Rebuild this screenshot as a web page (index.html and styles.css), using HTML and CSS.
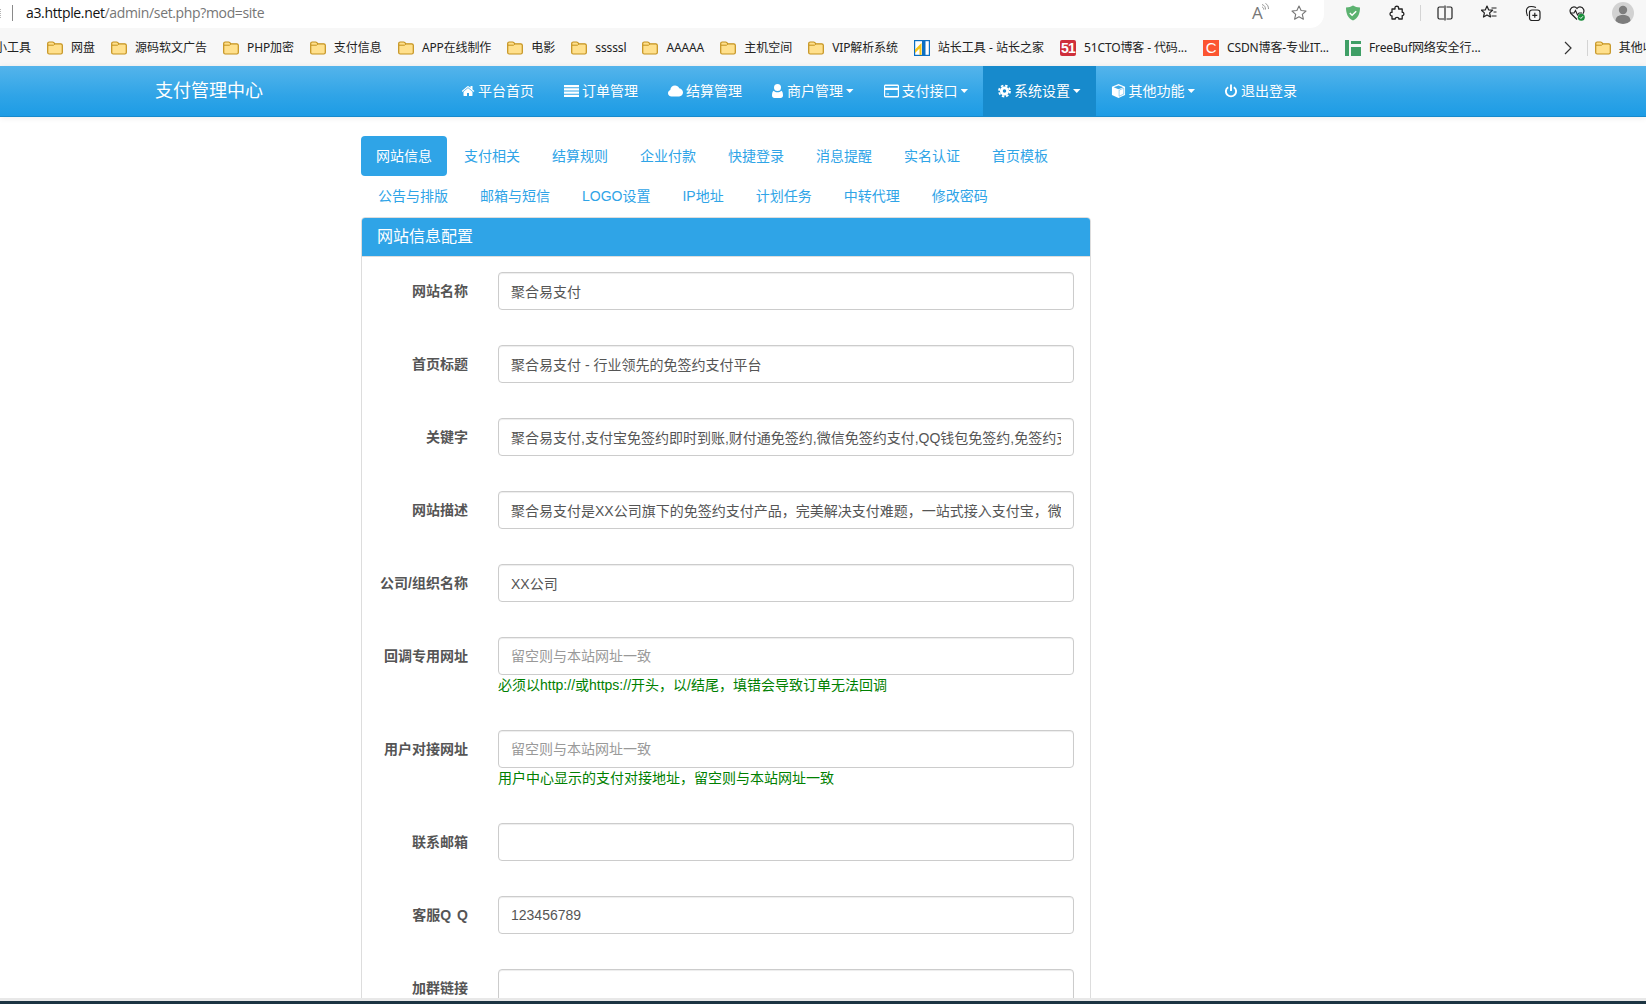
FILE: index.html
```html
<!DOCTYPE html>
<html lang="zh-CN">
<head>
    <meta charset="UTF-8">
    <meta name="viewport" content="width=device-width, initial-scale=1.0">
    <link rel="stylesheet" href="styles.css">
    <title>支付管理中心</title>
</head>
<body>

    <svg class="icon-defs" aria-hidden="true">
        <symbol id="folder" viewBox="0 0 16 16">
            <path d="M.7 3.5C.7 2.6 1.4 2 2.2 2h3.4c.4 0 .7.1 1 .4L8 3.8h5.8c.9 0 1.5.7 1.5 1.5v7.2c0 .9-.7 1.5-1.5 1.5H2.2c-.9 0-1.5-.7-1.5-1.5z" fill="#ffe08c" stroke="#c4911c" stroke-width="1.2"/>
            <path d="M1 5.2h5.5L8 3.8" fill="none" stroke="#c4911c" stroke-width="1"/>
        </symbol>
    </svg>

    <div class="page">

        <!-- browser chrome -->
        <div class="topbar">
            <div class="address">
                <span class="address-dots"></span>
                <span class="address-sep"></span>
                <span class="url"><b>a3.httple.net</b>/admin/set.php?mod=site</span>
                <span class="read-aloud">A<svg viewBox="0 0 8 10"><path d="M1 1.5c2.5.8 3.5 2.5 3.5 5M1 4c1.2.4 1.8 1.2 1.8 2.6M4.5 .5c2 1 3 3 3 5.500" fill="none" stroke="#8a8a8a" stroke-width=".9"/></svg></span>
                <svg class="tool" viewBox="0 0 16 16"><path d="M8 1l2.100 4.500 4.900.5-3.700 3.300 1.100 4.900L8 11.700l-4.400 2.500 1.100-4.900L1 6l4.900-.5z" fill="none" stroke="#777" stroke-width="1.100" stroke-linejoin="round"/></svg>
            </div>
            <div class="tools">
                <svg class="tool" viewBox="0 0 16 16"><path d="M8 .6c2 1.300 4 1.800 7 1.900 0 5.500-1.500 10.500-7 13-5.500-2.500-7-7.500-7-13 3-.1 5-.6 7-1.900z" fill="#5cb270"/><path d="M4.800 8l2.300 2.200 4.100-4" fill="none" stroke="#fff" stroke-width="1.500"/></svg>
                <svg class="tool" viewBox="0 0 16 16"><path d="M6 2.500C6 .8 9.600.8 9.600 2.500V4h3.600v3.300c2.200-.6 2.200 3.800 0 3.300V14H9.800c.5-2.200-4-2.200-3.500 0H3v-3.200C.4 11.400.4 6.700 3 7.300V4h3z" fill="none" stroke="#222" stroke-width="1.300" stroke-linejoin="round"/></svg>
                <span class="tool-sep"></span>
                <svg class="tool" viewBox="0 0 16 16"><path d="M7 2H2.500C1.700 2 1 2.700 1 3.500v9c0 .8.700 1.500 1.500 1.500H7M9.500 2h4c.8 0 1.500.7 1.500 1.500v9c0 .8-.7 1.500-1.500 1.500h-4M8 .5v15" fill="none" stroke="#222" stroke-width="1.200"/></svg>
                <svg class="tool" viewBox="0 0 16 16"><path d="M6 1l1.600 3.800 4 .4-3 2.700.9 4.100L6 9.900l-3.500 2.100.9-4.100-3-2.700 4-.4z" fill="none" stroke="#222" stroke-width="1.200" stroke-linejoin="round"/><path d="M10.500 3h5M12.500 7h3M10.500 11h5" stroke="#222" stroke-width="1.200"/></svg>
                <svg class="tool" viewBox="0 0 16 16"><path d="M2.500 11C1 7 1.300 4 2.500 2.800 4 1.300 8 1.300 11 2.500" fill="none" stroke="#222" stroke-width="1.100"/><path d="M4.500 7.500c0-1.500 1-2.500 2.500-2.500h5.500c1.400 0 2.500 1 2.500 2.500V13c0 1.400-1 2.500-2.500 2.500H7c-1.400 0-2.500-1-2.500-2.500z" fill="none" stroke="#222" stroke-width="1.200"/><path d="M9.800 7.800v5M7.300 10.300h5" stroke="#222" stroke-width="1.200"/></svg>
                <svg class="tool" viewBox="0 0 16 16"><path d="M8 14.500L2.200 8.800C-.3 6 1.800 1.800 5 1.800c1.300 0 2.300.7 3 1.700.7-1 1.700-1.700 3-1.700 3.200 0 5.300 4.200 2.800 7" fill="none" stroke="#222" stroke-width="1.200"/><path d="M1 8h4l1.500-2.500L8.500 10l1.500-2h3" fill="none" stroke="#222" stroke-width="1.100"/><circle cx="12.300" cy="12.300" r="3.500" fill="#1a8f3c"/><path d="M10.700 12.300l1.200 1.200 2-2.200" fill="none" stroke="#fff" stroke-width="1"/></svg>
                <span class="avatar"><svg viewBox="0 0 22 22"><circle cx="11" cy="8" r="4.200" fill="#7d7d7d"/><path d="M3.500 19c0-4.500 3.500-6 7.500-6s7.500 1.500 7.500 6c-2 2-5 3-7.500 3s-5.500-1-7.500-3z" fill="#7d7d7d"/></svg></span>
            </div>
        </div>

        <div class="bookmarks">
            <span class="mark mark-first">小工具</span>
            <span class="mark"><svg class="fav"><use href="#folder"/></svg>网盘</span>
            <span class="mark"><svg class="fav"><use href="#folder"/></svg>源码软文广告</span>
            <span class="mark latin"><svg class="fav"><use href="#folder"/></svg>PHP加密</span>
            <span class="mark"><svg class="fav"><use href="#folder"/></svg>支付信息</span>
            <span class="mark latin"><svg class="fav"><use href="#folder"/></svg>APP在线制作</span>
            <span class="mark"><svg class="fav"><use href="#folder"/></svg>电影</span>
            <span class="mark latin"><svg class="fav"><use href="#folder"/></svg>sssssl</span>
            <span class="mark latin"><svg class="fav"><use href="#folder"/></svg>AAAAA</span>
            <span class="mark"><svg class="fav"><use href="#folder"/></svg>主机空间</span>
            <span class="mark latin"><svg class="fav"><use href="#folder"/></svg>VIP解析系统</span>
            <span class="mark"><svg class="fav" viewBox="0 0 16 16"><rect x=".6" y=".6" width="14.800" height="14.800" fill="#fff" stroke="#0b6fc2" stroke-width="1.200"/><path d="M1 9.500L7.500 3v12h-2V8.500L1 13z" fill="#f5c518"/><rect x="8" y="1" width="3.500" height="14" fill="#0b6fc2"/></svg>站长工具 - 站长之家</span>
            <span class="mark latin"><span class="fav logo-51">51</span>51CTO博客 - 代码...</span>
            <span class="mark latin"><span class="fav logo-c">C</span>CSDN博客-专业IT...</span>
            <span class="mark latin"><svg class="fav" viewBox="0 0 16 16"><rect width="4" height="16" fill="#3f9f66"/><rect x="6" y="1" width="10" height="3" fill="#3f9f66"/><rect x="6" y="7" width="10" height="9" fill="#3f9f66"/></svg>FreeBuf网络安全行...</span>
            <svg class="more" viewBox="0 0 8 14"><path d="M1 1l6 6-6 6" fill="none" stroke="#333" stroke-width="1.200"/></svg>
            <span class="mark-sep"></span>
            <span class="mark mark-last"><svg class="fav"><use href="#folder"/></svg>其他收藏夹</span>
        </div>

        <!-- site nav -->
        <nav class="navbar">
            <a class="brand">支付管理中心</a>
            <ul class="nav-list">
                <li><a><svg class="nav-icon home" viewBox="0 0 1664 1408"><path transform="translate(-64 -192)" d="M1408 992v480q0 26-19 45t-45 19h-384v-384h-256v384h-384q-26 0-45-19t-19-45v-480q0-1 .5-3t.5-3l575-474 575 474q1 2 1 6zm223-69l-62 74q-8 9-21 11h-3q-13 0-21-7l-692-577-692 577q-12 8-24 7-13-2-21-11l-62-74q-8-10-7-23.5t11-21.5l719-599q32-26 76-26t76 26l244 204v-195q0-14 9-23t23-9h192q14 0 23 9t9 23v408l219 182q10 8 11 21.5t-7 23.5z"/></svg>平台首页</a></li>
                <li><a><svg class="nav-icon wide" viewBox="0 0 15 12"><path d="M0 0h15v2.200H0zM0 3.300h15v2.200H0zM0 6.600h15v2.200H0zM0 9.800h15V12H0z"/></svg>订单管理</a></li>
                <li><a><svg class="nav-icon wide" viewBox="0 0 15 11"><path d="M3.500 11C1.500 11 0 9.600 0 7.700c0-1.500 1-2.800 2.300-3.200C2.400 2 4.400 0 7 0c1.900 0 3.500 1.100 4.200 2.700C13.400 3 15 4.900 15 7.100 15 9.300 13.300 11 11.200 11z"/></svg>结算管理</a></li>
                <li><a><svg class="nav-icon user" viewBox="0 0 11 14"><circle cx="5.500" cy="3.500" r="3.500"/><path d="M1.800 6.800c1 1 2.300 1.500 3.700 1.500s2.700-.5 3.700-1.500C10.400 7.300 11 9 11 11.500c0 1.600-1 2.500-2.400 2.500H2.400C1 14 0 13.100 0 11.500 0 9 .6 7.300 1.800 6.800z"/></svg>商户管理<i class="caret"></i></a></li>
                <li><a><svg class="nav-icon wide" viewBox="0 0 15 13"><path fill-rule="evenodd" d="M1.500 0h12c.8 0 1.500.7 1.500 1.500v10c0 .8-.7 1.500-1.500 1.500h-12C.7 13 0 12.300 0 11.500v-10C0 .7.700 0 1.500 0zM1.200 1.500v1.800h12.600V1.500zm0 4v6h12.600v-6zM2.500 9h2.500v1H2.500z"/></svg>支付接口<i class="caret"></i></a></li>
                <li class="active"><a><svg class="nav-icon cog" viewBox="0 0 14 14"><circle cx="7" cy="7" r="3.400" fill="none" stroke="#fff" stroke-width="3"/><circle cx="7" cy="7" r="5.900" fill="none" stroke="#fff" stroke-width="2" stroke-dasharray="2.630 2"/></svg>系统设置<i class="caret"></i></a></li>
                <li><a><svg class="nav-icon wide" viewBox="0 0 15 16"><path d="M7.500 0L15 3v9.500L7.500 16 0 12.500V3z"/><path d="M2 3.600l5.500-2 5.500 2-5.500 2.300z" fill="#3faae8"/><path d="M8.200 7v7l5.300-2.500V4.800z" fill="#fff" stroke="#3faae8" stroke-width=".6"/></svg>其他功能<i class="caret"></i></a></li>
                <li><a><svg class="nav-icon power" viewBox="0 0 12 14"><path d="M3.200 3.200C1.700 4.100.900 5.500.900 7.200c0 2.900 2.300 5.200 5.100 5.200s5.100-2.300 5.100-5.200c0-1.700-.8-3.100-2.300-4M6 .5v6.500" fill="none" stroke="#fff" stroke-width="1.900"/></svg>退出登录</a></li>
            </ul>
        </nav>

        <main class="content">
            <ul class="pills">
                <li class="active"><a>网站信息</a></li>
                <li><a>支付相关</a></li>
                <li><a>结算规则</a></li>
                <li><a>企业付款</a></li>
                <li><a>快捷登录</a></li>
                <li><a>消息提醒</a></li>
                <li><a>实名认证</a></li>
                <li><a>首页模板</a></li>
                <li><a>公告与排版</a></li>
                <li><a>邮箱与短信</a></li>
                <li><a>LOGO设置</a></li>
                <li><a>IP地址</a></li>
                <li><a>计划任务</a></li>
                <li><a>中转代理</a></li>
                <li><a>修改密码</a></li>
            </ul>

            <section class="panel">
                <h3 class="panel-heading">网站信息配置</h3>
                <form class="panel-body">
                    <label class="field-label">网站名称</label>
                    <input class="field-input" type="text" value="聚合易支付">

                    <label class="field-label">首页标题</label>
                    <input class="field-input" type="text" value="聚合易支付 - 行业领先的免签约支付平台">

                    <label class="field-label">关键字</label>
                    <input class="field-input" type="text" value="聚合易支付,支付宝免签约即时到账,财付通免签约,微信免签约支付,QQ钱包免签约,免签约支付">

                    <label class="field-label">网站描述</label>
                    <input class="field-input" type="text" value="聚合易支付是XX公司旗下的免签约支付产品，完美解决支付难题，一站式接入支付宝，微信，财付通，QQ钱包">

                    <label class="field-label">公司/组织名称</label>
                    <input class="field-input" type="text" value="XX公司">

                    <label class="field-label">回调专用网址</label>
                    <div class="field-group">
                        <input class="field-input" type="text" placeholder="留空则与本站网址一致">
                        <p class="field-help">必须以http://或https://开头，以/结尾，填错会导致订单无法回调</p>
                    </div>

                    <label class="field-label">用户对接网址</label>
                    <div class="field-group">
                        <input class="field-input" type="text" placeholder="留空则与本站网址一致">
                        <p class="field-help">用户中心显示的支付对接地址，留空则与本站网址一致</p>
                    </div>

                    <label class="field-label">联系邮箱</label>
                    <input class="field-input" type="text">

                    <label class="field-label">客服Q Q</label>
                    <input class="field-input" type="text" value="123456789">

                    <label class="field-label">加群链接</label>
                    <input class="field-input" type="text">
                </form>
            </section>
        </main>

        <div class="window-edge"></div>
    </div>

</body>
</html>
```

FILE: styles.css
```css
html, body {
    margin: 0;
    padding: 0;
    height: 100%;
    overflow: hidden;
    background-color: #fff;
}

body {
    font-family: 'Liberation Sans', 'Noto Sans CJK SC', sans-serif;
    font-size: 14px;
    line-height: 20px;
    color: #555;
}

ul {
    list-style: none;
    margin: 0;
    padding: 0;
}

.icon-defs {
    display: none;
}

.page {
    display: flex;
    flex-direction: column;
    height: 1004px;
    overflow: hidden;
}

/* browser chrome */
.topbar {
    display: flex;
    flex: none;
    height: 28px;
    background-color: #f7f7f7;
}

.address {
    display: flex;
    align-items: center;
    width: 1324px;
    box-sizing: border-box;
    padding: 0 17px 2px 0;
    background-color: #fff;
    border-radius: 0 0 14px 0;
    font-family: 'Open Sans', 'Noto Sans CJK SC', sans-serif;
    font-size: 14px;
    letter-spacing: -0.35px;
    color: #767676;
}

.address-dots {
    width: 0;
    height: 9px;
    margin-right: 11px;
    border-left: 1px dotted #b5b5b5;
}

.address-sep {
    width: 1px;
    height: 16px;
    margin-right: 13px;
    background-color: #8a8a8a;
}

.url {
    flex: 1;
}

.url b {
    font-weight: 400;
    color: #111;
}

.read-aloud {
    display: flex;
    align-items: flex-start;
    width: 16px;
    margin-right: 23px;
    font-size: 17px;
    color: #777;
}

.read-aloud svg {
    flex: none;
    width: 8px;
    height: 10px;
    margin-left: -1px;
}

.tool {
    flex: none;
    width: 16px;
    height: 16px;
}

.tools {
    display: flex;
    align-items: center;
    gap: 28px;
    padding: 0 0 3px 21px;
}

.tool-sep {
    width: 1px;
    height: 16px;
    margin: 0 -12px 0 -13px;
    background-color: #d4d4d4;
}

.avatar {
    width: 22px;
    height: 22px;
    margin-left: -1px;
    background-color: #d2d2d2;
    border-radius: 50%;
    overflow: hidden;
}

.avatar svg {
    display: block;
}

.bookmarks {
    display: flex;
    flex: none;
    align-items: center;
    gap: 16px;
    box-sizing: border-box;
    height: 38px;
    padding-top: 1px;
    background-color: #f7f7f7;
    font-family: 'Noto Sans', 'Noto Sans CJK SC', sans-serif;
    font-size: 12px;
    color: #222;
    white-space: nowrap;
}

.mark {
    display: flex;
    flex: none;
    align-items: center;
    gap: 8px;
}

.mark.latin {
    letter-spacing: -0.12px;
}

.mark-first {
    margin-left: -5px;
}

.fav {
    flex: none;
    width: 16px;
    height: 16px;
}

.logo-51 {
    background-color: #cf2f3a;
    border-radius: 2px;
    color: #fff;
    font-family: 'Liberation Sans', sans-serif;
    font-size: 14px;
    font-weight: 700;
    line-height: 16px;
    text-align: center;
    letter-spacing: -0.8px;
}

.logo-c {
    background-color: #fc5531;
    color: #fff;
    font-family: 'Liberation Sans', sans-serif;
    font-size: 15px;
    line-height: 16px;
    text-align: center;
}

.more {
    flex: none;
    width: 8px;
    height: 14px;
    margin-left: 67px;
}

.mark-sep {
    flex: none;
    width: 1px;
    height: 16px;
    margin: 0 -9px 0 -1px;
    background-color: #d4d4d4;
}

/* site nav */
.navbar {
    display: flex;
    flex: none;
    position: relative;
    box-sizing: border-box;
    height: 51px;
    padding-left: 155px;
    background-image: linear-gradient(#54b4eb, #2fa4e7 60%, #1d9ce5);
    border-bottom: 1px solid #178acc;
    box-shadow: 0 1px 6px rgba(0, 0, 0, 0.08);
    color: #fff;
    text-shadow: 0 1px 0 rgba(0, 0, 0, 0.05);
}

.brand {
    width: 292px;
    font-size: 18px;
    line-height: 50px;
}

.nav-list {
    display: flex;
}

.nav-list a {
    display: flex;
    align-items: center;
    height: 50px;
    padding: 0 15px;
    white-space: nowrap;
}

.nav-list .active a {
    background-color: #178acc;
}

.nav-icon {
    width: 15px;
    height: 14px;
    margin-right: 3px;
    fill: #fff;
}

.nav-icon.home {
    width: 13px;
}

.nav-icon.user {
    width: 11px;
    margin-right: 4px;
}

.nav-icon.cog {
    width: 13px;
    margin-right: 3px;
}

.nav-icon.power {
    width: 12px;
    margin-right: 4px;
}

.caret {
    width: 7.5px;
    height: 4px;
    margin-left: 3px;
    background-color: #fff;
    clip-path: polygon(0 0, 100% 0, 50% 100%);
}

/* page content */
.content {
    flex: 1;
    min-height: 0;
    overflow: hidden;
    width: 730px;
    margin-left: 361px;
    padding-top: 19px;
}

.pills {
    display: flex;
    flex-wrap: wrap;
}

.pills li + li {
    margin-left: 2px;
}

.pills a {
    display: block;
    padding: 10px 15px;
    border-radius: 4px;
    color: #2fa4e7;
}

.pills .active a {
    background-color: #2fa4e7;
    color: #fff;
}

.panel {
    margin-top: 1px;
    background-color: #fff;
    border: 1px solid #ddd;
    border-radius: 4px;
}

.panel-heading {
    margin: 0;
    padding: 9px 15px;
    background-color: #2fa4e7;
    border-bottom: 1px solid #ddd;
    border-radius: 3px 3px 0 0;
    color: #fff;
    font-size: 16px;
    font-weight: 400;
    line-height: 20px;
}

.panel-body {
    display: grid;
    grid-template-columns: 91px 1fr;
    column-gap: 30px;
    row-gap: 35px;
    padding: 15px 16px 15px 15px;
}

.field-label {
    height: 38px;
    font-weight: 700;
    line-height: 38px;
    text-align: right;
    white-space: nowrap;
    word-spacing: 2px;
}

.field-input {
    display: block;
    width: 100%;
    height: 38px;
    box-sizing: border-box;
    padding: 8px 12px;
    background-color: #fff;
    border: 1px solid #ccc;
    border-radius: 4px;
    box-shadow: inset 0 1px 1px rgba(0, 0, 0, 0.075);
    color: #555;
    font-family: inherit;
    font-size: 14px;
}

.field-input::placeholder {
    color: #999;
}

.field-help {
    margin: 0;
    color: #008000;
}

.window-edge {
    flex: none;
    height: 3px;
    background-color: #e8e8e8;
    border-bottom: 3px solid #1c3442;
}
```
